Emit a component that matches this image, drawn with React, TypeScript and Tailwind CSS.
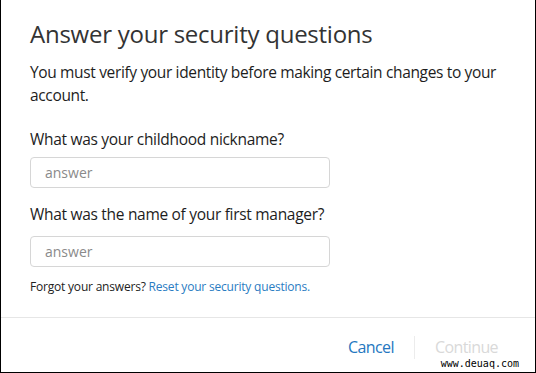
import React from "react";

export default function App() {
  return (
    <div
      className="relative w-[536px] h-[373px] bg-white border-l border-r border-b border-black flex flex-col overflow-hidden"
      style={{ fontFamily: '"Open Sans", "Liberation Sans", sans-serif' }}
    >
      <div className="flex flex-col px-[29px] pt-[19px]">
        <h1 className="text-[24px] leading-[30px] text-[#333333] tracking-[-0.25px]">
          Answer your security questions
        </h1>
        <p className="mt-[12px] text-[15.5px] leading-[23px] text-[#1d1d1d] tracking-[-0.35px] -mr-[10px]">
          You must verify your identity before making certain changes to your account.
        </p>
        <label className="mt-[21px] text-[15.5px] leading-[23px] text-[#1d1d1d] tracking-[-0.3px]">
          What was your childhood nickname?
        </label>
        <div className="mt-[6px] w-[300px] h-[31px] border border-[#d6d6d6] rounded-[4px] flex items-center pl-[14px] text-[14px] text-[#8a8a8a]">
          answer
        </div>
        <label className="mt-[15px] text-[15.5px] leading-[23px] text-[#1d1d1d] tracking-[-0.3px]">
          What was the name of your first manager?
        </label>
        <div className="mt-[10px] w-[300px] h-[31px] border border-[#d6d6d6] rounded-[4px] flex items-center pl-[14px] text-[14px] text-[#8a8a8a]">
          answer
        </div>
        <div className="mt-[11px] text-[12px] leading-[18px] tracking-[-0.2px]">
          <span className="text-[#222222]">Forgot your answers?</span>{" "}
          <span className="text-[#2a7cc2]">Reset your security questions.</span>
        </div>
      </div>
      <div className="mt-auto border-t border-[#e6e6e6] h-[55px] flex items-center justify-end pr-[37px] pt-[4px]">
        <span className="text-[16px] text-[#2577c0] tracking-[-0.6px]">Cancel</span>
        <div className="w-px h-[23px] bg-[#ececec] mx-[20px]" />
        <span className="text-[16px] text-[#d9d9d9] tracking-[-0.6px]">Continue</span>
      </div>
      <div
        className="absolute right-0 bottom-0 bg-white pl-[6px] pr-[16px] h-[16px] text-[10px] leading-[16px] text-black"
        style={{ fontFamily: '"DejaVu Sans Mono", monospace' }}
      >
        www.deuaq.com
      </div>
    </div>
  );
}
